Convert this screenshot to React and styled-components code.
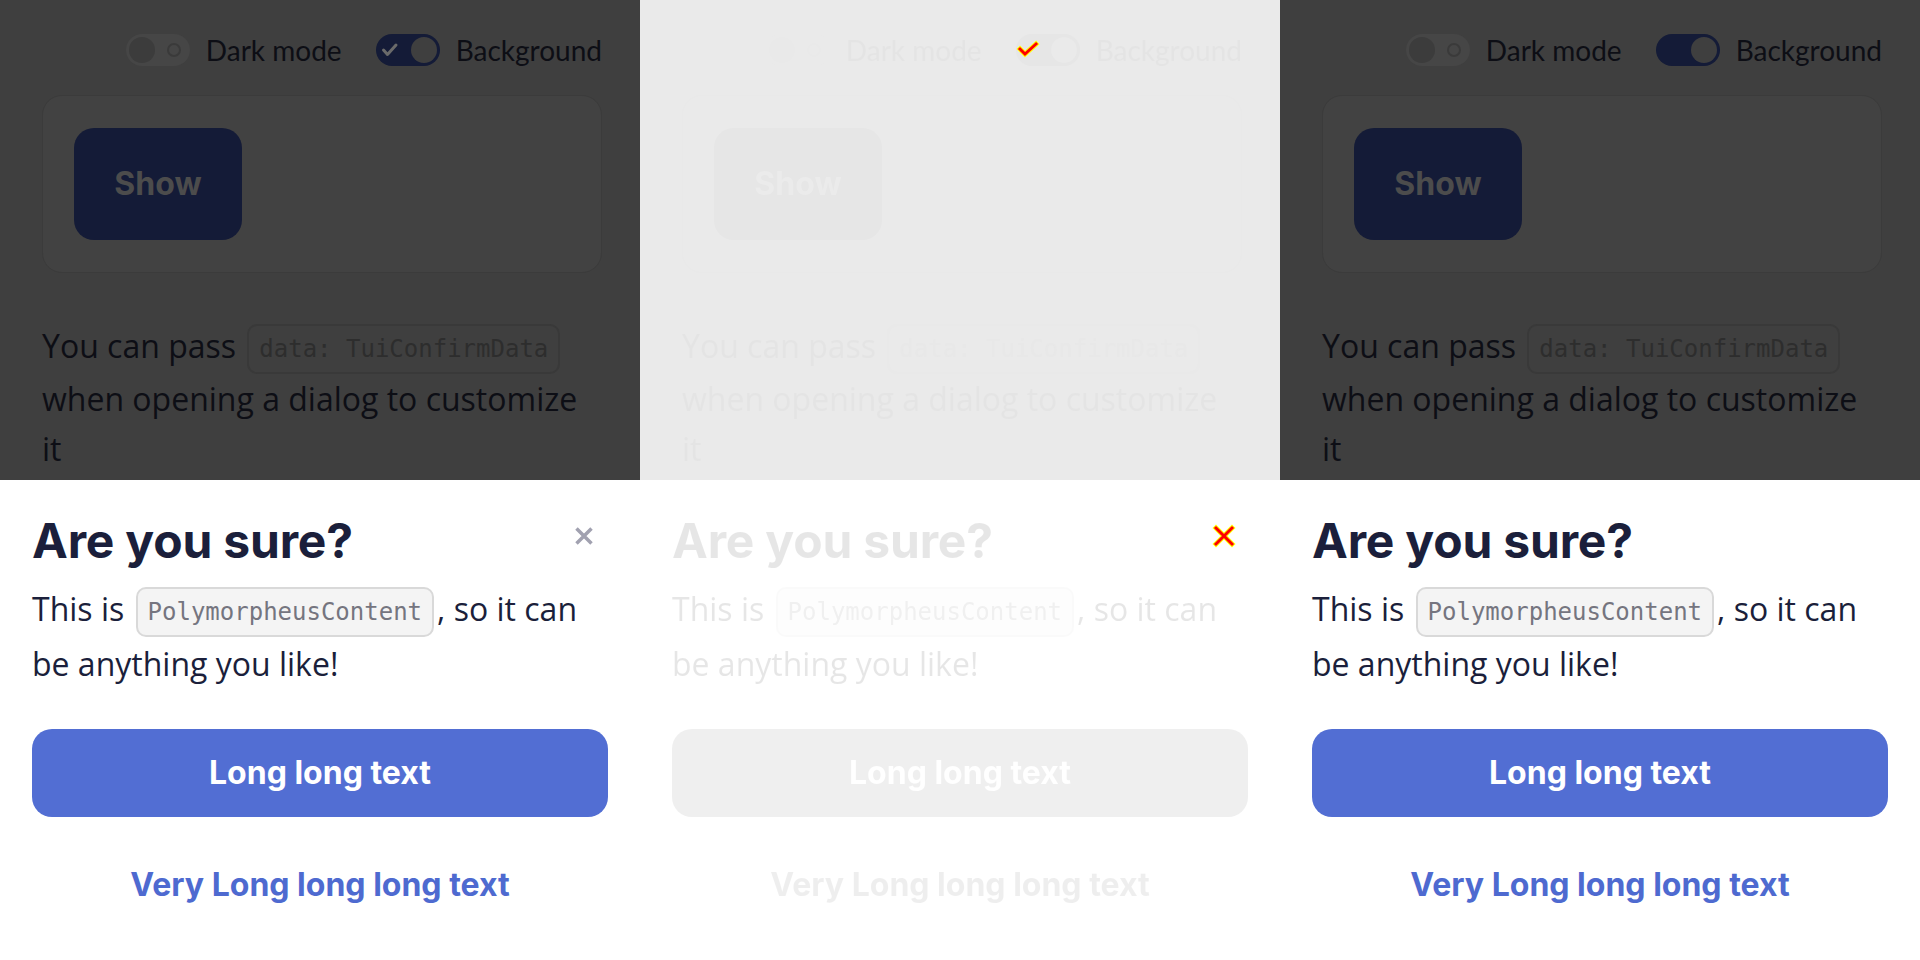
import React from "react";
import styled, { createGlobalStyle } from "styled-components";

const GlobalStyle = createGlobalStyle`
  html, body { margin: 0; padding: 0; background: #ffffff; }
  body { font-family: "Open Sans", "Liberation Sans", sans-serif; }
  *, *::before, *::after { box-sizing: border-box; }
`;

const Stage = styled.main`
  display: grid;
  grid-template-columns: repeat(3, 640px);
  width: 1920px;
  height: 960px;
  overflow: hidden;
`;

const Panel = styled.section`
  position: relative;
  height: 960px;
  background: #ffffff;
  overflow: hidden;
`;

const Screen = styled.div`
  display: flex;
  flex-direction: column;
  height: 100%;
  ${(p) => p.$ghost && "filter: grayscale(1); opacity: 0.105;"}
`;

/* ---------- dimmed page behind the sheet ---------- */
const Page = styled.div`
  flex: none;
  height: 480px;
  overflow: hidden;
  background: #3f3f3f;
  padding: 34px 38px 0 42px;
  display: flex;
  flex-direction: column;
`;

const ToggleRow = styled.div`
  display: flex;
  justify-content: flex-end;
  align-items: center;
  gap: 34px;
  height: 32px;
`;

const ToggleItem = styled.label`
  display: flex;
  align-items: center;
  gap: 16px;
  font: 400 28px/32px Lato, "Liberation Sans", sans-serif;
  color: #0d0e15;
`;

const Track = styled.span`
  position: relative;
  flex: none;
  width: 64px;
  height: 32px;
  border-radius: 16px;
  background: ${(p) => (p.$on ? "#141b37" : "#464646")};
`;

const Knob = styled.span`
  position: absolute;
  top: 3px;
  left: ${(p) => (p.$on ? "35px" : "3px")};
  width: 26px;
  height: 26px;
  border-radius: 50%;
  background: ${(p) => (p.$on ? "#3f3f3f" : "#3c3c3c")};
`;

const OffRing = styled.span`
  position: absolute;
  top: 9px;
  right: 9px;
  width: 14px;
  height: 14px;
  border-radius: 50%;
  border: 2px solid #3a3a3a;
`;

const CheckIcon = styled.svg`
  position: absolute;
  left: 0;
  top: 0;
`;

const Card = styled.div`
  margin-top: 29px;
  height: 178px;
  flex: none;
  border-radius: 20px;
  background: #424242;
  border: 1px solid #3b3b3b;
  padding: 32px 31px;
`;

const ShowButton = styled.button`
  width: 168px;
  height: 112px;
  border: 0;
  border-radius: 20px;
  background: #141b37;
  color: #4c4c4c;
  font: 700 32px/1 Inter, "Liberation Sans", sans-serif;
  cursor: pointer;
`;

const Paragraph = styled.p`
  margin: 48px 0 0;
  font: 400 32px/50px "Open Sans", "Liberation Sans", sans-serif;
  color: #0d0e15;
`;

const Code = styled.code`
  display: inline-block;
  vertical-align: middle;
  height: 50px;
  margin: 0 3px;
  padding: 0 10px;
  border-radius: 10px;
  border: 2px solid ${(p) => (p.$dim ? "#393939" : "#d9d9d9")};
  background: ${(p) => (p.$dim ? "#3f3f3f" : "#f4f4f4")};
  color: ${(p) => (p.$dim ? "#2d2d2d" : "#75757f")};
  font: 400 24px/46px "DejaVu Sans Mono", "Liberation Mono", monospace;
`;

/* ---------- bottom sheet dialog ---------- */
const Dialog = styled.div`
  flex: 1;
  background: #ffffff;
  padding: 32px;
  display: flex;
  flex-direction: column;
  color: #1b1f3b;
`;

const Header = styled.div`
  display: flex;
  align-items: flex-start;
  justify-content: space-between;
`;

const Title = styled.h2`
  margin: 0;
  font: 700 48px/58px Inter, "Liberation Sans", sans-serif;
  letter-spacing: -0.2px;
`;

const CloseButton = styled.button`
  width: 20px;
  height: 20px;
  margin: 14px 14px 0 0;
  padding: 0;
  border: 0;
  background: none;
  display: flex;
  cursor: pointer;
`;

const Body = styled.p`
  margin: 12px 0 0;
  font: 400 32px/54px "Open Sans", "Liberation Sans", sans-serif;
`;

const Actions = styled.div`
  margin-top: 38px;
  display: flex;
  flex-direction: column;
  gap: 24px;
`;

const ActionButton = styled.button`
  height: 88px;
  border: 0;
  border-radius: 20px;
  background: ${(p) => (p.$primary ? "#526ed3" : "transparent")};
  color: ${(p) => (p.$primary ? "#ffffff" : "#4e6ad0")};
  font: 700 32px/1 Inter, "Liberation Sans", sans-serif;
  cursor: pointer;
`;

const Marks = styled.svg`
  position: absolute;
  left: 0;
  top: 0;
  pointer-events: none;
`;

function Toggle({ on, showCheck }) {
  return (
    <Track $on={on}>
      {on && showCheck && (
        <CheckIcon width="32" height="32" viewBox="0 0 32 32">
          <polyline
            points="7.5,16 11.5,20.5 20,11"
            fill="none"
            stroke="#6a6a6a"
            strokeWidth="3"
            strokeLinecap="round"
            strokeLinejoin="round"
          />
        </CheckIcon>
      )}
      {!on && <OffRing />}
      <Knob $on={on} />
    </Track>
  );
}

function Content({ withCheck, withClose, ghost }) {
  return (
    <Screen $ghost={ghost}>
      <Page>
        <ToggleRow>
          <ToggleItem>
            <Toggle on={false} />
            Dark mode
          </ToggleItem>
          <ToggleItem>
            <Toggle on showCheck={withCheck} />
            Background
          </ToggleItem>
        </ToggleRow>
        <Card>
          <ShowButton>Show</ShowButton>
        </Card>
        <Paragraph>
          You can pass <Code $dim>data: TuiConfirmData</Code> when opening a
          dialog to customize it
        </Paragraph>
      </Page>
      <Dialog>
        <Header>
          <Title>Are you sure?</Title>
          {withClose && (
            <CloseButton aria-label="Close">
              <svg width="20" height="20" viewBox="0 0 20 20">
                <path
                  d="M2.5 2.5 L17.5 17.5 M17.5 2.5 L2.5 17.5"
                  stroke="#a1a1b0"
                  strokeWidth="3.5"
                  strokeLinecap="butt"
                />
              </svg>
            </CloseButton>
          )}
        </Header>
        <Body>
          This is <Code>PolymorpheusContent</Code>, so it can be anything you
          like!
        </Body>
        <Actions>
          <ActionButton $primary>Long long text</ActionButton>
          <ActionButton>Very Long long long text</ActionButton>
        </Actions>
      </Dialog>
    </Screen>
  );
}

function DiffMarks() {
  return (
    <Marks width="640" height="960" viewBox="0 0 640 960">
      <g fill="none" strokeLinecap="square" strokeLinejoin="miter">
        <polyline points="380,49 385,54 396,44" stroke="#ffff00" strokeWidth="5" />
        <polyline points="380,49 385,54 396,44" stroke="#ff0000" strokeWidth="3" />
        <path d="M576 528 L592 544 M592 528 L576 544" stroke="#ffff00" strokeWidth="5" />
        <path d="M576 528 L592 544 M592 528 L576 544" stroke="#ff0000" strokeWidth="3" />
      </g>
    </Marks>
  );
}

export default function App() {
  return (
    <>
      <GlobalStyle />
      <Stage>
        <Panel>
          <Content withCheck withClose />
        </Panel>
        <Panel>
          <Content ghost />
          <DiffMarks />
        </Panel>
        <Panel>
          <Content />
        </Panel>
      </Stage>
    </>
  );
}
